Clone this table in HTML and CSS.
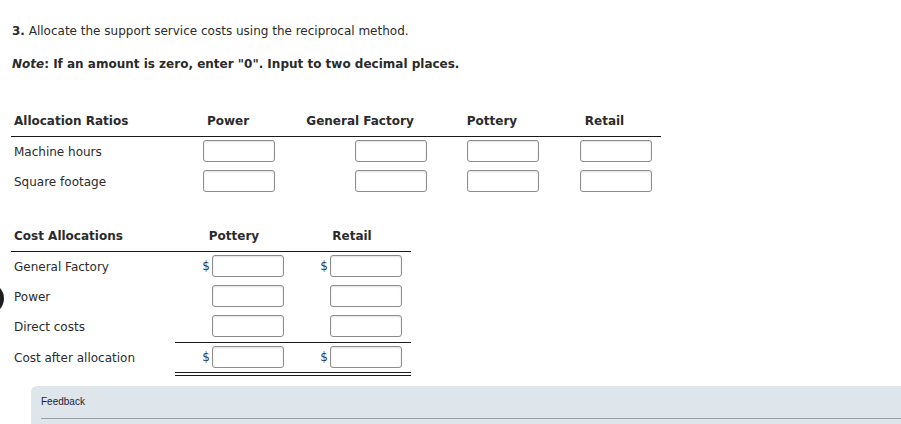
FILE: index.html
```html
<!DOCTYPE html>
<html>
<head>
<meta charset="utf-8">
<link rel="stylesheet" href="styles.css">
</head>
<body>
<div class="nav-dot"></div>
<div class="page">
  <p class="q"><b>3.</b> Allocate the support service costs using the reciprocal method.</p>
  <p class="note"><b><i>Note</i>: If an amount is zero, enter "0". Input to two decimal places.</b></p>

  <table class="grid t1">
    <colgroup><col class="c-lab1"><col class="c-112"><col class="c-152"><col class="c-112"><col class="c-113"></colgroup>
    <thead>
      <tr><th class="lab">Allocation Ratios</th><th>Power</th><th>General Factory</th><th>Pottery</th><th>Retail</th></tr>
    </thead>
    <tbody>
      <tr><td class="lab">Machine hours</td><td class="in"><input></td><td class="in"><input></td><td class="in"><input></td><td class="in"><input></td></tr>
      <tr><td class="lab">Square footage</td><td class="in"><input></td><td class="in"><input></td><td class="in"><input></td><td class="in"><input></td></tr>
    </tbody>
  </table>

  <table class="grid t2">
    <colgroup><col class="c-lab2"><col class="c-118"><col class="c-118"></colgroup>
    <thead>
      <tr><th class="lab">Cost Allocations</th><th>Pottery</th><th>Retail</th></tr>
    </thead>
    <tbody>
      <tr><td class="lab">General Factory</td><td class="in"><span class="cur">$</span><input></td><td class="in"><span class="cur">$</span><input></td></tr>
      <tr><td class="lab">Power</td><td class="in"><input></td><td class="in"><input></td></tr>
      <tr class="sub"><td class="lab">Direct costs</td><td class="in"><input></td><td class="in"><input></td></tr>
      <tr class="tot"><td class="lab">Cost after allocation</td><td class="in"><span class="cur">$</span><input></td><td class="in"><span class="cur">$</span><input></td></tr>
    </tbody>
  </table>

  <div class="feedback">
    <div class="fb-title">Feedback</div>
  </div>
</div>
</body>
</html>
```

FILE: styles.css
```css
html, body {
  margin: 0;
  padding: 0;
  background: #fff;
  overflow: hidden;
}
body {
  font-family: "DejaVu Sans", Verdana, sans-serif;
  font-size: 12px;
  color: #2b2b2b;
  position: relative;
  height: 424px;
}
.nav-dot {
  position: absolute;
  left: -27px;
  top: 283px;
  width: 31px;
  height: 31px;
  border-radius: 50%;
  background: #1e1e1e;
}
.page {
  padding-left: 11px;
}
.q {
  margin: 0;
  padding-top: 23px;
  padding-left: 1px;
  line-height: 16px;
}
.note {
  margin: 17px 0 0;
  padding-left: 1px;
  line-height: 16px;
}
.grid {
  border-collapse: collapse;
  table-layout: fixed;
}
.t1 { width: 650px; margin-top: 40px; }
.t2 { width: 400px; margin-top: 30px; }
.c-lab1 { width: 161px; }
.c-lab2 { width: 164px; }
.c-112 { width: 112px; }
.c-113 { width: 113px; }
.c-118 { width: 118px; }
.c-152 { width: 152px; }
.grid th {
  font-weight: bold;
  text-align: center;
  line-height: 16px;
  padding: 1px 9px 7px;
  border-bottom: 1px solid #1a1a1a;
  white-space: nowrap;
}
.grid th.lab,
.grid td.lab {
  text-align: left;
  padding-left: 3px;
}
.grid td {
  height: 28px;
  padding: 0 9px 2px;
  line-height: 16px;
  white-space: nowrap;
  vertical-align: middle;
}
.grid td.lab {
  padding-top: 1px;
  padding-bottom: 1px;
}
.grid td.in {
  text-align: right;
  font-size: 0;
}
.cur {
  font-size: 12px;
  color: #2d3a55;
  vertical-align: middle;
  margin-right: 2px;
}
input {
  box-sizing: border-box;
  width: 72px;
  height: 22px;
  margin: 0;
  padding: 0;
  border: 1px solid #8c8c8c;
  border-radius: 3px;
  box-shadow: inset 0 1px 2px rgba(0,0,0,0.12);
  background: #fff;
  vertical-align: middle;
}
.t2 tr.sub td.in {
  border-bottom: 1px solid #1a1a1a;
}
.t2 tr.tot td {
  height: 27px;
}
.t2 tr.tot td.in {
  border-bottom: 4px double #1a1a1a;
}
.feedback {
  margin-top: 10px;
  margin-left: 20px;
  background: #dee5eb;
  border-top-left-radius: 6px;
  height: 40px;
  padding: 10px 0 0 10px;
  box-sizing: border-box;
}
.fb-title {
  font-family: "Liberation Sans", Arial, sans-serif;
  font-size: 10px;
  color: #1c1c3c;
  line-height: 12px;
  padding-bottom: 10px;
  border-bottom: 1px solid #9aa0a4;
}
```
